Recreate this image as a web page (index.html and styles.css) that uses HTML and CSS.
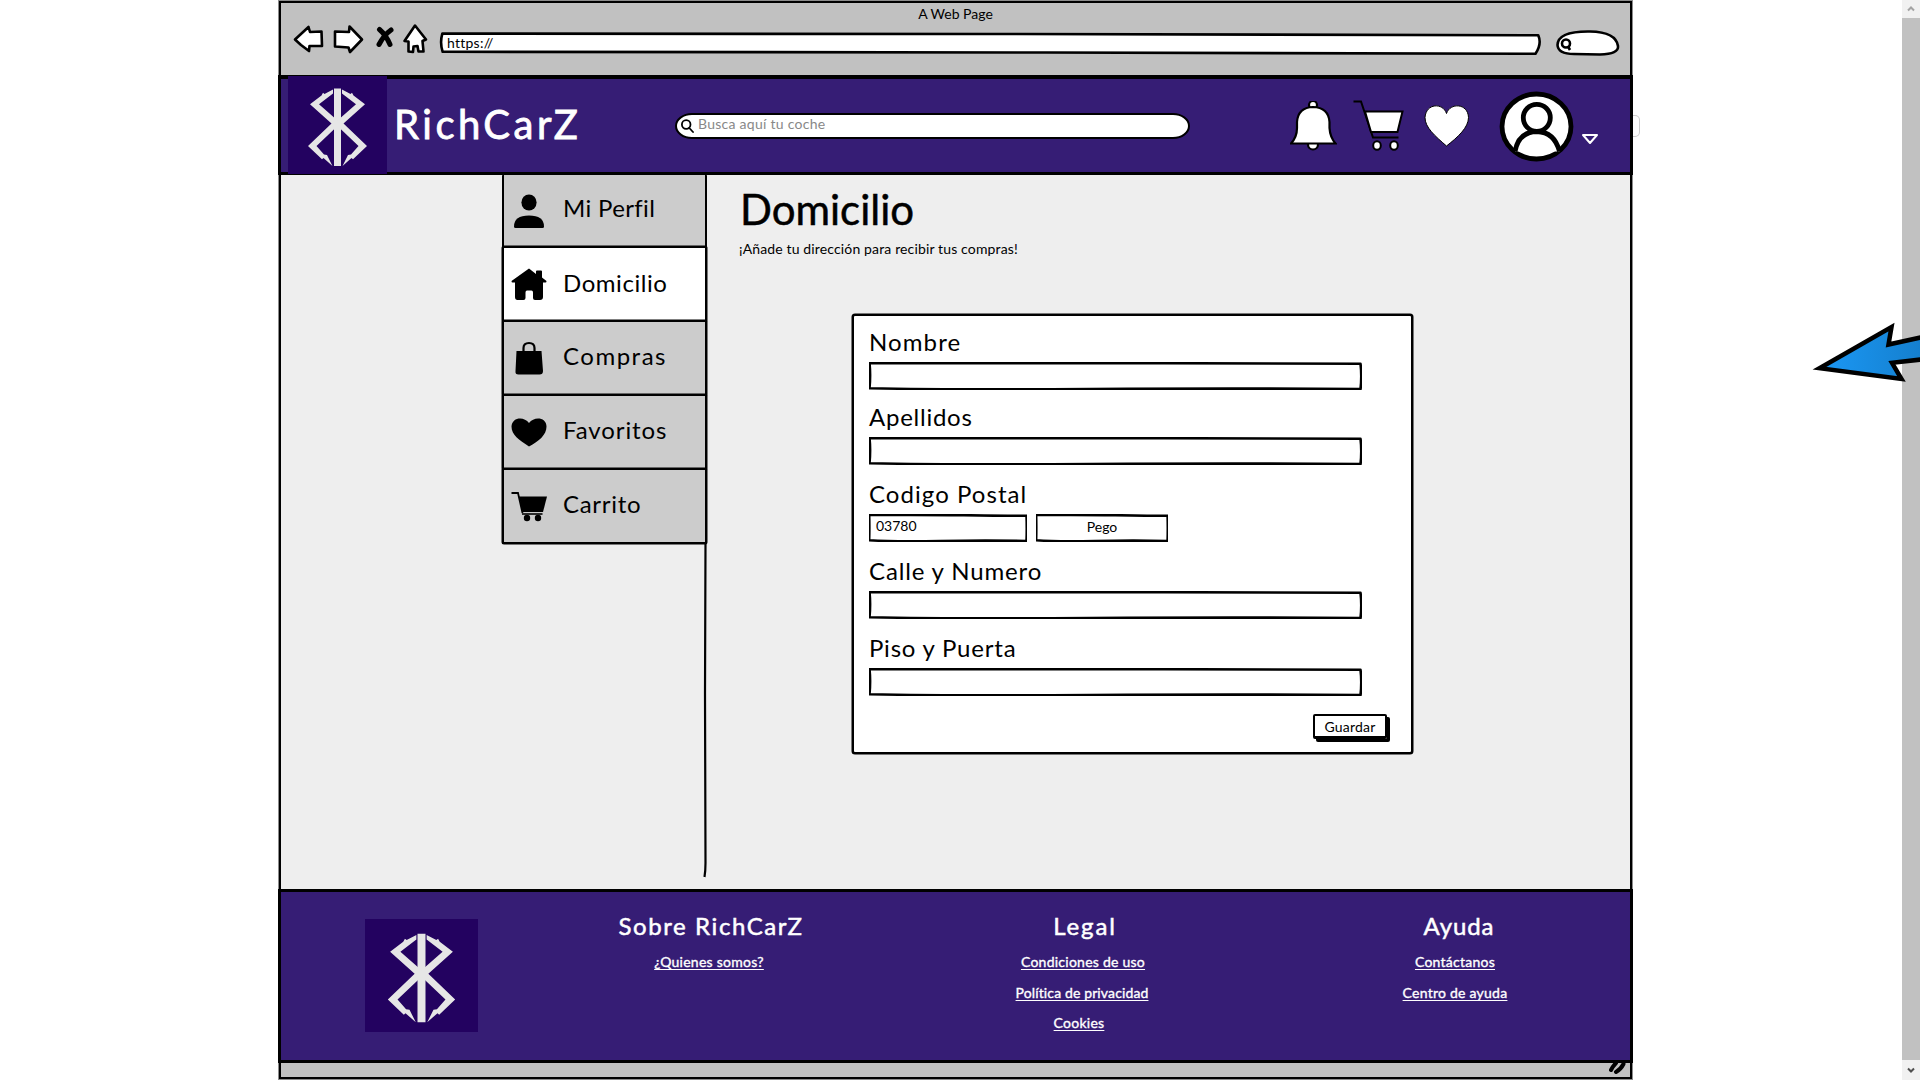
FILE: index.html
```html
<!DOCTYPE html>
<html lang="es">
<head>
<meta charset="utf-8">
<title>RichCarZ - Domicilio</title>
<link rel="stylesheet" href="styles.css">
</head>
<body>
<svg class="defs" width="0" height="0">
  <symbol id="sketch" viewBox="0 0 100 28" preserveAspectRatio="none">
    <path d="M.1 1 Q35 .6 60 1.200 T99.700 1.800 Q100 14 99.700 27 Q75 26.200 45 27 T.1 26.200 Q.35 13 .1 1Z" vector-effect="non-scaling-stroke"/>
  </symbol>
  <symbol id="brand" viewBox="0 0 99 98">
    <path d="M46 12.500h7v77.500h-7z"/>
    <path d="M45 13.500 L36.500 18 L35 16.800 L33.500 19.500 L22 28.300 L43.500 47.500 L20 70 L34 83.300 L35.500 82 L44.500 90 L39 79 L36 78.500 L28.500 70 L49.500 50 L49.500 44.500 L31 28.300 L45 17.500Z"/>
    <path transform="translate(99 0) scale(-1 1)" d="M45 13.500 L36.500 18 L35 16.800 L33.500 19.500 L22 28.300 L43.500 47.500 L20 70 L34 83.300 L35.500 82 L44.500 90 L39 79 L36 78.500 L28.500 70 L49.500 50 L49.500 44.500 L31 28.300 L45 17.500Z"/>
  </symbol>
</svg>
<div class="page">
  <main class="window">
    <div class="chrome">
      <div class="chrome-title"><span class="t">A Web Page</span></div>
      <div class="toolbar">
        <svg class="back" width="31" height="31" viewBox="293 23 31 31"><path d="M295 39.500 L308.500 27 L310 32 L321.500 31.500 L322 46 L309.500 46 L309 51 L301 45Z"/></svg>
        <svg class="fwd" width="32" height="31" viewBox="333 23 32 31"><path d="M335 31.500 L349 32 L349.500 26.500 L362 39.500 L350 52 L348.500 47.500 L335 46.500Z"/></svg>
        <svg class="stop" width="18" height="31" viewBox="376 23 18 31"><path d="M379.500 29.500 Q386 35 390 44.500 M391 30 Q384 35 379 44.500"/></svg>
        <svg class="home" width="25" height="31" viewBox="403 23 25 31"><path d="M415 25.500 L426 39.500 L422.500 41 L423.500 51.500 L418.500 51.500 L417.500 46 L413.500 46.500 L413 52 L408.500 51.500 L408.500 41.500 L404.500 41Z"/></svg>
        <div class="url">
          <svg class="sketch-fill" viewBox="0 0 100 24" preserveAspectRatio="none"><path d="M.12 1.600 Q-.12 11 .15 19.800 L55 20.500 L99.500 21.800 Q100.100 12 99.750 3.300 L50 2Z" vector-effect="non-scaling-stroke"/></svg>
          <span class="t">https://</span>
        </div>
        <svg class="mini-search" width="65" height="31" viewBox="1555 25 65 31"><path d="M1557.500 45 Q1558 31 1590 31.500 Q1616 32 1618 46 Q1619 54 1600 54.500 L1574 54 Q1558 54 1557.500 45Z"/><circle cx="1566" cy="43.500" r="4"/><path d="M1568 46.500 L1570 50"/></svg>
      </div>
    </div>

    <header class="site-header">
      <div class="logo"><svg width="99" height="98"><use href="#brand"/></svg></div>
      <div class="name"><span class="t">RichCarZ</span></div>
      <div class="search">
        <svg width="13" height="14" viewBox="0 0 13 14"><circle cx="5.200" cy="5.500" r="4.300"/><path d="M8.300 9 L12 13"/></svg>
        <span class="t">Busca aquí tu coche</span>
      </div>
      <nav class="actions">
        <svg class="bell" width="47" height="50" viewBox="1290 101 47 50"><circle cx="1313" cy="105" r="4"/><circle cx="1313" cy="144.500" r="5"/><path d="M1291 143.500 Q1297 137 1297 128 L1297 122 Q1298 107.500 1313 107 Q1328.500 107.500 1329.500 122 L1329.500 128 Q1330 137 1335.500 143.500Z"/></svg>
        <svg class="cart" width="51" height="51" viewBox="1353 100 51 51"><path d="M1353.500 101.500 H1361 L1373 137.500 H1398.500"/><path d="M1365 111.500 H1402.500 L1397.500 132 H1371Z" fill="#fff"/><ellipse cx="1377" cy="145.500" rx="3.800" ry="4.200" fill="#fff"/><ellipse cx="1394" cy="145.500" rx="3.800" ry="4.200" fill="#fff"/></svg>
        <svg class="heart" width="45" height="42" viewBox="1424 105 45 42"><path d="M1446.500 146 C1435 136 1425 127.500 1425 117.500 C1426 103 1443 102.500 1446.500 113.500 C1450 102.500 1468 103 1468.500 117.500 C1468.500 127.500 1458 137 1446.500 146Z"/></svg>
        <svg class="avatar" width="75" height="71" viewBox="1499.500 90.500 75 71"><ellipse cx="1537" cy="126" rx="34.500" ry="32.500"/><circle cx="1537.300" cy="117.300" r="13.500"/><path d="M1515.500 151 Q1519 131.500 1537.300 131 Q1555 131.500 1560 151"/></svg>
        <svg class="caret" width="18" height="12" viewBox="0 0 18 12"><path d="M2 2 H16 L9 10Z"/></svg>
      </nav>
      <div class="stray"></div>
    </header>

    <div class="content">
      <aside class="side">
        <div class="item"><svg viewBox="0 0 36 36"><ellipse cx="18" cy="9.500" rx="7.600" ry="8"/><path d="M3 33.500 Q3 22.500 18 22.500 T33 33.500 Q33 35 31.500 35 H4.500 Q3 35 3 33.500Z"/></svg><span class="t w1">Mi Perfil</span></div>
        <div class="item active"><svg viewBox="0 0 36 36"><path d="M18 2.500 L25 8 V5.500 Q25 4.500 26 4.500 H30 Q31 4.500 31 5.500 V11.500 L35.500 15 Q35.500 16.500 34.500 16.500 H32 V31 Q32 34 29 34 H24 Q22 34 22 32 V26.500 Q22 24.500 20.500 24.500 H16 Q14.500 24.500 14.500 26.500 V32 Q14.500 34 12.500 34 H6.500 Q4 34 4 31 V16.500 H1.500 Q.5 16.500 .5 15Z"/></svg><span class="t w2">Domicilio</span></div>
        <div class="item"><svg viewBox="0 0 36 36"><path d="M5.500 11 H30.500 L32 31 Q32 34.500 28.500 34.500 H7.500 Q4 34.500 4.500 31Z"/><path d="M12.500 12 V8 Q12.500 3 18 3 T23.500 8 V12" fill="none" stroke="#000" stroke-width="2.200"/></svg><span class="t w3">Compras</span></div>
        <div class="item"><svg viewBox="0 0 36 36"><path d="M18 32.500 C8 26 .5 21 .5 12.500 C1 3 13 2 18 9 C23 2 35.500 3 35.500 12.500 C35.500 21 28 27 18 32.500Z"/></svg><span class="t w4">Favoritos</span></div>
        <div class="item"><svg viewBox="0 0 36 36"><path d="M.5 5 H7 L11.500 25" fill="none" stroke="#000" stroke-width="1.800"/><path d="M11 26 H31.500" stroke="#000" stroke-width="1.600"/><path d="M8 8.500 H36 L32 24 H11.500Z"/><circle cx="16" cy="30" r="3.200"/><circle cx="27" cy="30" r="3.200"/></svg><span class="t w5">Carrito</span></div>
        <svg class="divider" width="6" height="335" viewBox="0 0 6 335"><path d="M3.500 0 L3 150 L3.500 320 Q3.500 328 2.500 334"/></svg>
      </aside>
      <section class="main">
        <h1><span class="t">Domicilio</span></h1>
        <p class="lead"><span class="t">¡Añade tu dirección para recibir tus compras!</span></p>
        <form class="card">
          <label class="l1"><span class="t">Nombre</span></label>
          <div class="field"><svg class="sketch-fill"><use href="#sketch"/></svg></div>
          <label class="l2"><span class="t">Apellidos</span></label>
          <div class="field"><svg class="sketch-fill"><use href="#sketch"/></svg></div>
          <label class="l3"><span class="t">Codigo Postal</span></label>
          <div class="pair">
            <div class="field zip"><svg class="sketch-fill"><use href="#sketch"/></svg><span class="t">03780</span></div>
            <div class="field town"><svg class="sketch-fill"><use href="#sketch"/></svg><span class="t">Pego</span></div>
          </div>
          <label class="l4"><span class="t">Calle y Numero</span></label>
          <div class="field"><svg class="sketch-fill"><use href="#sketch"/></svg></div>
          <label class="l5"><span class="t">Piso y Puerta</span></label>
          <div class="field"><svg class="sketch-fill"><use href="#sketch"/></svg></div>
          <div class="save"><span class="t">Guardar</span></div>
        </form>
      </section>
    </div>

    <footer class="site-footer">
      <div class="logo"><svg width="113" height="113"><use href="#brand"/></svg></div>
      <div class="col c1"><h2><span class="t">Sobre RichCarZ</span></h2><a><span class="t">¿Quienes somos?</span></a></div>
      <div class="col c2"><h2><span class="t">Legal</span></h2><a><span class="t">Condiciones de uso</span></a><a class="policy"><span class="t">Política de privacidad</span></a><a class="cookies"><span class="t">Cookies</span></a></div>
      <div class="col c3"><h2><span class="t">Ayuda</span></h2><a><span class="t">Contáctanos</span></a><a><span class="t">Centro de ayuda</span></a></div>
    </footer>
    <div class="status"><svg width="18" height="13" viewBox="0 0 18 13"><path d="M2 7 Q4 3 7 0 M7 9 Q12 6 14.500 1"/></svg></div>
  </main>
  <div class="scrollbar">
    <div class="sb up"><svg width="8" height="6" viewBox="0 0 8 6"><path d="M1 4.500 L4 1.500 L7 4.500"/></svg></div>
    <div class="sb down"><svg width="8" height="6" viewBox="0 0 8 6"><path d="M1 1.500 L4 4.500 L7 1.500"/></svg></div>
  </div>
  <svg class="arrow" width="110" height="64" viewBox="1810 320 110 64">
    <defs><linearGradient id="blue" x1="0" x2="1"><stop offset="0" stop-color="#1b98f5"/><stop offset="1" stop-color="#147dcb"/></linearGradient></defs>
    <path d="M1819.500 368.200 L1891.500 327 L1888.500 344.500 L1930 335.500 V358.500 L1892 362.800 L1901.500 379Z" fill="url(#blue)"/>
  </svg>
</div>
</body>
</html>
```
FILE: styles.css
```css
* { box-sizing: border-box; }
body { margin: 0; background: #fff; color: #000; font-family: Lato, "Liberation Sans", sans-serif; font-size: 14px; overflow: hidden; }
h1, h2, p { margin: 0; font-weight: 400; }
svg { display: block; flex: none; }
.t { white-space: nowrap; display: inline-block; }
.defs { position: absolute; }

.page { position: relative; width: 1920px; height: 1080px; display: flex; justify-content: space-between; overflow: hidden; }
.window { width: 1353px; height: 1078px; margin: 1px 0 0 279px; border: 2px solid #000; box-shadow: 0 0 0 1px rgba(0,0,0,.45); background: #c1c1c1; }
.sketch-fill { position: absolute; inset: 0; width: 100%; height: 100%; overflow: visible; fill: #fff; stroke: #000; stroke-width: 2.6; stroke-linejoin: round; }

.chrome { height: 72px; }
.chrome-title { height: 20px; line-height: 22px; text-align: center; }
.toolbar { display: flex; align-items: flex-start; padding-left: 12px; fill: #fff; stroke: #000; stroke-width: 2.6; stroke-linejoin: round; }
.fwd { margin-left: 9px; }
.stop { margin-left: 11px; stroke-width: 5; stroke-linecap: round; fill: none; }
.home { margin-left: 9px; }
.url { position: relative; width: 1100px; height: 24px; margin: 9px 0 0 13px; padding-left: 6px; line-height: 21px; }
.url .t { position: relative; letter-spacing: .25px; }
.mini-search { margin: 2px 0 0 14px; }

.site-header { position: relative; display: flex; align-items: flex-start; height: 100px; margin: 0 -3px; border: 3px solid #000; border-top-width: 4px; background: #361d75; color: #fff; }
.logo { background: #230260; }
.logo svg { fill: #e6e6e6; }
.site-header .logo { width: 99px; height: 98px; margin: -3px 0 0 7px; }
.name { width: 281px; margin-left: 7px; font-size: 40px; line-height: 50px; padding-top: 20px; letter-spacing: 3.5px; -webkit-text-stroke: .8px #fff; }
.search { display: flex; align-items: center; width: 515px; height: 26px; margin-top: 34px; padding-left: 4px; border: 2px solid #000; border-radius: 17px / 13px; background: #fff; color: #888; }
.search svg { fill: none; stroke: #000; stroke-width: 1.8; stroke-linecap: round; }
.search .t { margin: -6px 0 0 4px; letter-spacing: .27px; }
.actions { display: flex; align-items: flex-start; margin-left: 100px; stroke: #000; }
.bell { margin-top: 22px; fill: #fff; stroke-width: 2.2; }
.cart { margin: 21px 0 0 16px; fill: none; stroke-width: 2; }
.heart { margin: 26px 0 0 20px; fill: #fff; stroke-width: 1; }
.avatar { margin: 12px 0 0 30px; fill: #fff; stroke-width: 4.8; }
.caret { margin: 54px 0 0 7px; fill: none; stroke: #fff; stroke-width: 2; stroke-linejoin: round; }
.stray { position: absolute; left: 1352px; top: 36px; width: 7px; height: 22px; border: 1px solid #ccc; border-left: 0; border-radius: 0 5px 5px 0; }

.content { display: flex; height: 714px; background: #eee; }
.side { width: 205px; margin-left: 221px; }
.item { display: flex; align-items: center; height: 76px; margin-top: -2px; padding: 0 0 3px 7px; border: 2px solid #000; box-shadow: 0 0 0 .5px #000; border-radius: 2px; background: #ccc; font-size: 24px; }
.item:first-child { height: 74px; margin-top: -1px; border-top: 0; padding-bottom: 0; box-shadow: none; }
.item.active { background: #fff; }
.item svg { width: 36px; height: 36px; margin-top: 2px; }
.item .t { margin: -2px 0 0 16px; }
.item:first-child .t { margin-top: -5px; }
.item.active .t { margin-top: 0; }
.w1 { letter-spacing: .35px; } .w2 { letter-spacing: .55px; } .w3 { letter-spacing: 1.5px; } .w4 { letter-spacing: .9px; } .w5 { letter-spacing: .7px; }
.divider { margin: -1px 0 0 200px; fill: none; stroke: #000; stroke-width: 2.2; }
.main { width: 720px; margin-left: 33px; }
h1 { font-size: 42px; line-height: 50px; padding-top: 9px; -webkit-text-stroke: .5px #000; }
.lead { line-height: 20px; padding-top: 5px; margin-left: -1px; letter-spacing: .14px; }
.card { width: 561px; height: 440px; margin: 55px 0 0 112px; padding-left: 15px; border: 2px solid #000; box-shadow: 0 0 0 .5px #000; border-radius: 3px; background: #fff; display: flex; flex-direction: column; }
.card label { font-size: 24px; line-height: 28px; height: 28px; }
.l1 { margin: 12px 0 6px; letter-spacing: 1.1px; }
.l2 { margin: 13px 0 6px; letter-spacing: .75px; }
.l3, .l4, .l5 { margin: 15px 0 6px; letter-spacing: 1.05px; }
.l4 { letter-spacing: .85px; }
.l5 { letter-spacing: .78px; }
.field { position: relative; width: 493px; height: 28px; }
.field .t { position: relative; }
.pair { display: flex; gap: 9px; }
.zip { width: 158px; padding-left: 7px; line-height: 24px; }
.town { width: 132px; text-align: center; line-height: 26px; }
.save { width: 74px; height: 25px; margin: 18px 0 0 444px; border: 2px solid #000; border-bottom-width: 3px; border-radius: 2px; box-shadow: 3px 3px 0 #000; text-align: center; line-height: 21px; letter-spacing: .2px; }

.site-footer { position: relative; display: flex; align-items: flex-start; height: 174px; margin: 0 -3px; border: 3px solid #000; background: #361d75; color: #fff; text-align: center; }
.site-footer .logo { width: 113px; height: 113px; margin: 27px 0 0 84px; }
.col { display: flex; flex-direction: column; align-items: center; width: 240px; }
.col h2 { font-size: 24px; line-height: 28px; margin-top: 20px; -webkit-text-stroke: .5px #fff; }
.col a { line-height: 20px; margin-top: 12px; -webkit-text-stroke: .35px #fff; letter-spacing: .25px; }
.col a .t { text-decoration: underline; text-underline-offset: 2px; }
.col a + a { margin-top: 11px; }
.c1 { margin-left: 111px; }
.c1 h2 { letter-spacing: 1.6px; padding-left: 4px; }
.c2 { margin-left: 134px; }
.c2 h2 { letter-spacing: 1.9px; padding-left: 4px; }
.col .policy { padding-right: 2px; letter-spacing: .13px; }
.col .cookies { margin-top: 10px; padding-right: 8px; }
.c3 { margin-left: 132px; }
.c3 h2 { letter-spacing: .9px; padding-left: 8px; }
.status { display: flex; justify-content: flex-end; height: 14px; padding-right: 3px; }
.status svg { fill: none; stroke: #000; stroke-width: 4; stroke-linecap: round; }

.scrollbar { width: 18px; height: 1080px; display: flex; flex-direction: column; justify-content: space-between; background: #c1c1c1; }
.sb { height: 18px; background: #f1f1f1; display: flex; align-items: center; justify-content: center; fill: none; stroke: #a3a3a3; stroke-width: 2; }
.sb.down { height: 20px; stroke: #505050; }
.arrow { position: absolute; left: 1810px; top: 320px; stroke: #000; stroke-width: 4.5; }
```
